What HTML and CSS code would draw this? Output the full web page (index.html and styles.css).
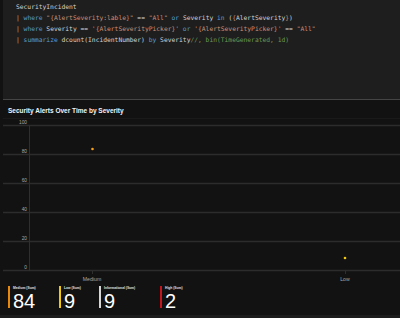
FILE: index.html
```html
<!DOCTYPE html>
<html lang="en">
<head>
    <meta charset="UTF-8">
    <title>Security Alerts Over Time by Severity</title>
    <link rel="stylesheet" href="styles.css">
</head>
<body>
    <div class="page">
        <!-- Query editor -->
        <pre class="editor"><span class="plain">SecurityIncident</span>
<span class="pipe">|</span> <span class="kw">where</span> <span class="str">"{AlertSeverity:lable}"</span> == <span class="str">"All"</span> <span class="kw">or</span> Severity <span class="kw">in</span> (<span class="str">{</span>AlertSeverity<span class="str">}</span>)
<span class="pipe">|</span> <span class="kw">where</span> Severity == <span class="str">'{AlertSeverityPicker}'</span> <span class="kw">or</span> <span class="str">'{AlertSeverityPicker}'</span> == <span class="str">"All"</span>
<span class="pipe">|</span> <span class="kw">summarize</span> dcount(IncidentNumber) <span class="kw">by</span> Severity<span class="cm">//, bin(TimeGenerated, 1d)</span></pre>

        <!-- Chart -->
        <div class="chart">
            <div class="chart-title">Security Alerts Over Time by Severity</div>

            <svg class="plot" width="400" height="168" viewBox="0 0 400 168">
                <line class="sep" x1="3" y1="2.5" x2="400" y2="2.5"/>
                <g class="grid">
                    <line x1="3" y1="9.5" x2="400" y2="9.5"/>
                    <line x1="3" y1="38.5" x2="400" y2="38.5"/>
                    <line x1="3" y1="67.5" x2="400" y2="67.5"/>
                    <line x1="3" y1="96.5" x2="400" y2="96.5"/>
                    <line x1="3" y1="125.5" x2="400" y2="125.5"/>
                    <line x1="3" y1="154.5" x2="400" y2="154.5"/>
                </g>
                <line class="axis" x1="29.5" y1="9" x2="29.5" y2="155"/>
                <line class="axis" x1="92.5" y1="155" x2="92.5" y2="158"/>
                <line class="axis" x1="345.5" y1="155" x2="345.5" y2="158"/>
                <g class="ylabels">
                    <text x="27" y="8">100</text>
                    <text x="27" y="37">80</text>
                    <text x="27" y="66">60</text>
                    <text x="27" y="95">40</text>
                    <text x="27" y="124">20</text>
                    <text x="27" y="153">0</text>
                </g>
                <circle class="dot-medium" cx="92.5" cy="33" r="1.3"/>
                <circle class="dot-low" cx="345" cy="142" r="1.3"/>
                <g class="xlabels">
                    <text x="92" y="165">Medium</text>
                    <text x="345" y="165">Low</text>
                </g>
            </svg>

            <!-- Tiles -->
            <div class="tiles">
                <div class="tile tile-medium">
                    <div class="tile-bar"></div>
                    <div class="tile-body">
                        <div class="tile-label">Medium (Sum)</div>
                        <div class="tile-value">84</div>
                    </div>
                </div>
                <div class="tile tile-low">
                    <div class="tile-bar"></div>
                    <div class="tile-body">
                        <div class="tile-label">Low (Sum)</div>
                        <div class="tile-value">9</div>
                    </div>
                </div>
                <div class="tile tile-info">
                    <div class="tile-bar"></div>
                    <div class="tile-body">
                        <div class="tile-label">Informational (Sum)</div>
                        <div class="tile-value">9</div>
                    </div>
                </div>
                <div class="tile tile-high">
                    <div class="tile-bar"></div>
                    <div class="tile-body">
                        <div class="tile-label">High (Sum)</div>
                        <div class="tile-value">2</div>
                    </div>
                </div>
            </div>
        </div>

        <div class="footer"></div>
    </div>
</body>
</html>
```

FILE: styles.css
```css
* {
    margin: 0;
    padding: 0;
    box-sizing: border-box;
}

body {
    font-family: "Liberation Sans", Arial, sans-serif;
    background: #121212;
    width: 400px;
    height: 318px;
    overflow: hidden;
}

.page {
    display: flex;
    flex-direction: column;
    height: 318px;
}

/* Query editor */
.editor {
    margin-left: 3px;
    height: 100px;
    padding: 1px 0 0 13px;
    background: #1e1e1e;
    border-bottom: 1px solid #454545;
    font-family: "DejaVu Sans Mono", monospace;
    font-size: 6.3px;
    line-height: 11px;
    color: #d4d4d4;
    white-space: pre;
    overflow: hidden;
}

.pipe {
    color: #c8ad4e;
}

.kw {
    color: #569cd6;
}

.str {
    color: #ce9178;
}

.cm {
    color: #6a9955;
}

/* Chart */
.chart {
    display: flex;
    flex-direction: column;
}

.chart-title {
    margin: 6px 0 0 8px;
    font-size: 6.5px;
    font-weight: bold;
    line-height: 10px;
    color: #f2f2f2;
}

.plot {
    display: block;
}

.plot .sep {
    stroke: #1a1a1a;
    stroke-width: 1;
}

.plot .grid line {
    stroke: #2c2c2c;
    stroke-width: 1.3;
}

.plot .axis {
    stroke: #2f2f2f;
    stroke-width: 1;
}

.plot text {
    font-family: "Liberation Sans", Arial, sans-serif;
    fill: #a8a8a8;
}

.ylabels text {
    font-size: 4.8px;
    text-anchor: end;
}

.xlabels text {
    font-size: 5.2px;
    text-anchor: middle;
}

.dot-medium {
    fill: #f5a11c;
}

.dot-low {
    fill: #f2c80f;
}

/* Tiles */
.tiles {
    display: flex;
    margin: 2px 0 0 8px;
}

.tile {
    display: flex;
    align-items: flex-start;
}

.tile-medium { width: 51px; }
.tile-low { width: 40px; }
.tile-info { width: 61px; }

.tile-bar {
    width: 2px;
    height: 22px;
}

.tile-medium .tile-bar { background: #e8890c; }
.tile-low .tile-bar { background: #f2c80f; }
.tile-info .tile-bar { background: #d6d6d6; }
.tile-high .tile-bar { background: #c4161c; }

.tile-body {
    margin-left: 3px;
}

.tile-label {
    font-size: 3.3px;
    line-height: 4.5px;
    font-weight: bold;
    color: #e0e0e0;
    white-space: nowrap;
}

.tile-value {
    font-size: 20px;
    line-height: 20px;
    color: #ffffff;
}

.footer {
    margin-top: auto;
    height: 3px;
    background: #1c1c1c;
}
```
